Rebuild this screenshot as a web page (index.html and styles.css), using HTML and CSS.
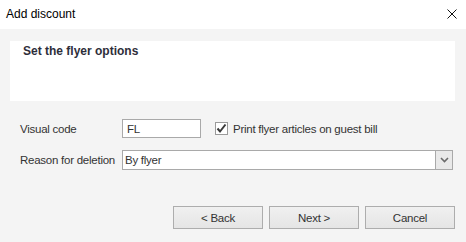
FILE: index.html
```html
<!DOCTYPE html>
<html>
<head>
<meta charset="utf-8">
<link rel="stylesheet" href="styles.css">
</head>
<body>
<div class="dialog">
  <div class="titlebar">
    <span class="title">Add discount</span>
    <svg class="close" width="10" height="10" viewBox="0 0 10 10"><path d="M0.5 0.5 L9.5 9.5 M9.5 0.5 L0.5 9.5" stroke="#111" stroke-width="1" fill="none"/></svg>
  </div>
  <div class="content">
    <div class="header"><span class="heading">Set the flyer options</span></div>
    <div class="form">
      <div class="row">
        <span class="label">Visual code</span>
        <div class="textbox code">FL</div>
        <label class="check">
          <span class="box"><svg width="11" height="11" viewBox="0 0 11 11"><path d="M1.5 5.5 L4 8.5 L9.5 1.5" stroke="#3a3a3a" stroke-width="2" fill="none"/></svg></span>
          <span>Print flyer articles on guest bill</span>
        </label>
      </div>
      <div class="row">
        <span class="label">Reason for deletion</span>
        <div class="select">
          <span class="value">By flyer</span>
          <span class="arrow"><svg width="9" height="6" viewBox="0 0 9 6"><path d="M1 1 L4.5 4.5 L8 1" stroke="#6a6a6a" stroke-width="1.6" fill="none"/></svg></span>
        </div>
      </div>
    </div>
    <div class="buttons">
      <button class="btn">&lt; Back</button>
      <button class="btn">Next &gt;</button>
      <button class="btn">Cancel</button>
    </div>
  </div>
</div>
</body>
</html>
```
FILE: styles.css
```css
html, body {
  margin: 0;
  padding: 0;
}
body {
  width: 466px;
  height: 242px;
  background: #f4f4f4;
  font-family: "Liberation Sans", Arial, sans-serif;
  font-size: 11.5px;
  letter-spacing: -0.25px;
  color: #333;
  overflow: hidden;
}
.dialog {
  display: flex;
  flex-direction: column;
}
.titlebar {
  height: 29px;
  background: #fff;
  display: flex;
  align-items: center;
  justify-content: space-between;
  padding: 0 9px 0 6px;
}
.title {
  color: #000;
  font-size: 12px;
  letter-spacing: 0;
  margin-top: -2px;
}
.close {
  margin-top: -1px;
}
.content {
  padding: 12px 11px 0 10px;
}
.header {
  height: 60px;
  background: #fff;
  padding: 3px 0 0 13px;
  box-sizing: border-box;
}
.heading {
  font-weight: bold;
  font-size: 12px;
  letter-spacing: 0;
  color: #2e2e3a;
}
.form {
  margin-top: 18px;
  display: flex;
  flex-direction: column;
  gap: 12px;
}
.row {
  display: flex;
  align-items: center;
}
.label {
  width: 112px;
  flex-shrink: 0;
  box-sizing: border-box;
  padding-left: 10px;
  white-space: nowrap;
  color: #333;
}
.textbox {
  height: 19px;
  box-sizing: border-box;
  border: 1px solid #a9a9a9;
  background: #fff;
  display: flex;
  align-items: center;
  padding-left: 4px;
}
.code {
  width: 79px;
  flex-shrink: 0;
}
.check {
  display: flex;
  align-items: center;
  margin-left: 14px;
  gap: 5px;
  white-space: nowrap;
}
.box {
  width: 13px;
  height: 13px;
  box-sizing: border-box;
  border: 1px solid #9a9a9a;
  background: #fff;
  display: flex;
  align-items: center;
  justify-content: center;
}
.select {
  width: 331px;
  height: 20px;
  flex-shrink: 0;
  box-sizing: border-box;
  border: 1px solid #a9a9a9;
  background: #fff;
  display: flex;
  align-items: stretch;
}
.value {
  flex: 1;
  display: flex;
  align-items: center;
  padding-left: 2px;
}
.arrow {
  width: 16px;
  border-left: 1px solid #a9a9a9;
  background: #e9e9e9;
  display: flex;
  align-items: center;
  justify-content: center;
}
.buttons {
  margin-top: 36px;
  display: flex;
  justify-content: flex-end;
  gap: 6px;
}
.btn {
  width: 90px;
  height: 23px;
  box-sizing: border-box;
  border: 1px solid #adadad;
  background: linear-gradient(#f0f0f0, #e5e5e5);
  font-family: inherit;
  font-size: 11.5px;
  letter-spacing: -0.25px;
  color: #333;
  padding: 0;
  margin: 0;
}
```
